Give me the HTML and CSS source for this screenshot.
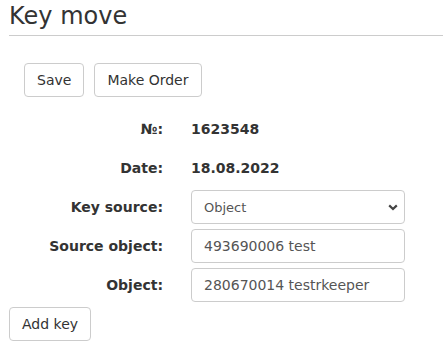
FILE: index.html
```html
<!DOCTYPE html>
<html lang="en">
<head>
  <meta charset="UTF-8">
  <title>Key move</title>
  <link rel="stylesheet" href="styles.css">
</head>
<body>
  <div class="page">
    <h1 class="title">Key move</h1>

    <div class="toolbar">
      <button type="button" class="btn">Save</button>
      <button type="button" class="btn">Make Order</button>
    </div>

    <form class="form">
      <div class="row">
        <label class="label">№:</label>
        <div class="value static">1623548</div>
      </div>
      <div class="row">
        <label class="label">Date:</label>
        <div class="value static">18.08.2022</div>
      </div>
      <div class="row">
        <label class="label" for="keySource">Key source:</label>
        <div class="value select-wrap">
          <select id="keySource" class="field">
            <option>Object</option>
          </select>
          <svg class="chevron" width="10" height="7" viewBox="0 0 10 7">
            <path d="M1.2 1.4 L5 5 L8.8 1.4" fill="none" stroke="#444" stroke-width="2.2"/>
          </svg>
        </div>
      </div>
      <div class="row">
        <label class="label" for="sourceObject">Source object:</label>
        <div class="value">
          <input type="text" id="sourceObject" class="field" value="493690006 test">
        </div>
      </div>
      <div class="row">
        <label class="label" for="object">Object:</label>
        <div class="value">
          <input type="text" id="object" class="field" value="280670014 testrkeeper">
        </div>
      </div>
      <button type="button" class="btn">Add key</button>
    </form>
  </div>
</body>
</html>
```

FILE: styles.css
```css
body {
  margin: 0;
  font-family: "DejaVu Sans", Verdana, sans-serif;
  font-size: 14px;
  line-height: 20px;
  color: #333333;
  background: #ffffff;
}
.page {
  padding-left: 9px;
}
.title {
  margin: 0;
  padding: 2px 0 5px 0;
  font-size: 24px;
  line-height: 28px;
  font-weight: normal;
  border-bottom: 1px solid #cccccc;
}
.toolbar {
  display: flex;
  gap: 10px;
  margin: 27px 0 15px 15px;
}
.btn {
  font-family: inherit;
  font-size: 14px;
  line-height: 20px;
  padding: 6px 12px;
  color: #333333;
  background: #ffffff;
  border: 1px solid #cccccc;
  border-radius: 4px;
  cursor: pointer;
}
.row {
  display: flex;
  align-items: center;
  height: 34px;
  margin-bottom: 5px;
}
.label {
  width: 154px;
  text-align: right;
  font-weight: bold;
}
.value {
  margin-left: 28px;
  width: 214px;
}
.static {
  font-weight: bold;
}
.field {
  box-sizing: border-box;
  width: 100%;
  height: 34px;
  padding: 6px 12px;
  font-family: inherit;
  font-size: 14px;
  color: #555555;
  background: #ffffff;
  border: 1px solid #cccccc;
  border-radius: 4px;
  outline: none;
}
.select-wrap {
  position: relative;
}
select.field {
  appearance: none;
  -webkit-appearance: none;
  font-size: 13px;
}
.chevron {
  position: absolute;
  right: 7px;
  top: 14px;
}
```
